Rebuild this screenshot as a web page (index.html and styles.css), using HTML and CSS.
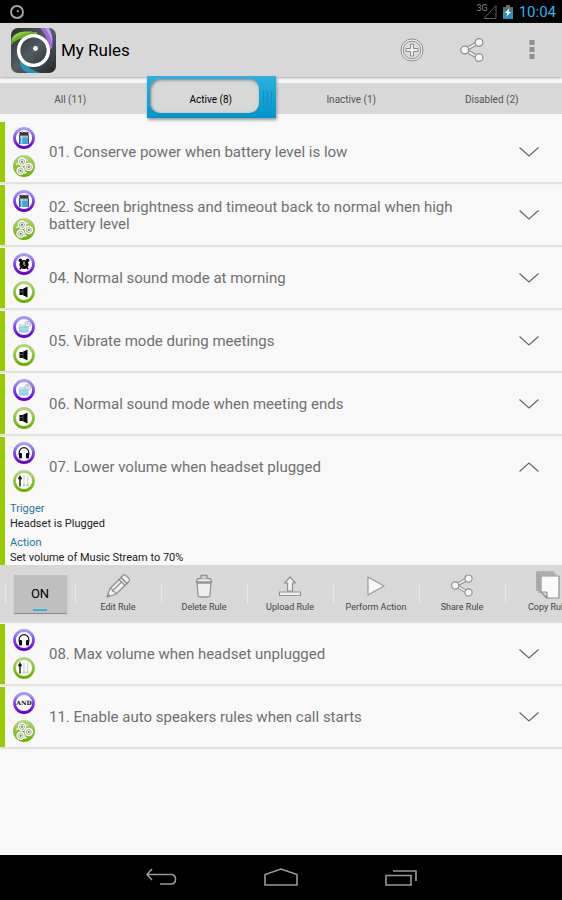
FILE: index.html
```html
<!DOCTYPE html>
<html lang="en">
<head>
<meta charset="utf-8">
<meta name="viewport" content="width=device-width, initial-scale=1">
<title>My Rules</title>
<link rel="stylesheet" href="styles.css">
</head>
<body>
<svg class="defs" aria-hidden="true">
  <defs>
    <linearGradient id="purple" x1="0" y1="0" x2="0" y2="1"><stop offset="0" stop-color="#a99cf8"/><stop offset=".5" stop-color="#8348e6"/><stop offset="1" stop-color="#6a00c8"/></linearGradient>
    <linearGradient id="green" x1="0" y1="0" x2="0" y2="1"><stop offset="0" stop-color="#b4d67c"/><stop offset=".5" stop-color="#8cc43a"/><stop offset="1" stop-color="#6cae00"/></linearGradient>
    <linearGradient id="slate" x1="0" y1="0" x2="1" y2="1"><stop offset="0" stop-color="#2b3337"/><stop offset=".5" stop-color="#535d64"/><stop offset="1" stop-color="#22282c"/></linearGradient>
    <clipPath id="tile"><rect width="45" height="45" rx="7"/></clipPath>
  </defs>
  <symbol id="trigger-ring" viewBox="0 0 22 22"><circle cx="11" cy="11" r="9.500" fill="#fcfcff" stroke="url(#purple)" stroke-width="2.800"/></symbol>
  <symbol id="action-ring" viewBox="0 0 22 22"><circle cx="11" cy="11" r="9.500" fill="#fcfffa" stroke="url(#green)" stroke-width="2.800"/></symbol>
  <symbol id="battery" viewBox="0 0 22 22"><use href="#trigger-ring"/><path d="M6.500 5h9v5h-9z" fill="#34383b"/><path d="M8.500 4.500h1.500v1.500h-1.500zM12.500 4.500H14V6h-1.500z" fill="#888"/><path d="M6 8.500h10v3H6z" fill="#a9b4ba"/><path d="M6 11h10v6H6z" fill="#3ba9dd"/><path d="M6.500 8v9M15.500 8v9" stroke="#47545b"/><path d="M8.700 9v8" stroke="#fff" opacity=".6"/></symbol>
  <symbol id="gears" viewBox="0 0 22 22"><circle cx="11" cy="11" r="11" fill="url(#green)"/><g fill="#fff"><circle cx="9" cy="6.800" r="4.200"/><circle cx="15.800" cy="12" r="4.200"/><circle cx="7.600" cy="15.800" r="4.200"/><path d="M13 4l2 1-1 1.500zM3.500 8l2 1-2 1.500zM12 16l2 2-3 1z"/></g><g fill="#eceee9" stroke="#8f9a88" stroke-width=".7"><circle cx="9" cy="6.800" r="2.600"/><circle cx="15.800" cy="12" r="2.600"/><circle cx="7.600" cy="15.800" r="2.600"/></g><g fill="#70706f"><circle cx="9" cy="6.800" r="1"/><circle cx="15.800" cy="12" r="1"/><circle cx="7.600" cy="15.800" r="1"/></g></symbol>
  <symbol id="alarm" viewBox="0 0 22 22"><use href="#trigger-ring"/><g fill="#0a0a0a"><circle cx="11" cy="11.500" r="4.600"/><circle cx="7.300" cy="7.300" r="1.700"/><circle cx="14.700" cy="7.300" r="1.700"/></g><path d="M8 14.500l-1.200 1.800M14 14.500l1.200 1.800" stroke="#0a0a0a" stroke-width="1.500"/><path d="M11 8.500v3l1.500 1.500" fill="none" stroke="#fff"/></symbol>
  <symbol id="speaker" viewBox="0 0 22 22"><use href="#action-ring"/><path d="M6.500 8H9.500L14.500 5.500v11L9.500 14H6.500z" fill="#0a0a0a"/><path d="M10 8v6M6.500 10.500h3.500" stroke="#777" stroke-width=".6"/></symbol>
  <symbol id="calendar" viewBox="0 0 22 22"><use href="#trigger-ring"/><path d="M6 8h9.500v8.500H6z" fill="#8fd3ea"/><path d="M6 8h9.500v2.500H6z" fill="#cfe4ea"/><path d="M7 13h7.500" stroke="#c5eaf5" stroke-width=".8"/><circle cx="14.700" cy="8" r="2.800" fill="#e8eef1" stroke="#9eb4bf" stroke-width=".8"/><path d="M14.500 6.300V8l1.300-.8" fill="none" stroke="#809aa6" stroke-width=".6"/></symbol>
  <symbol id="headset" viewBox="0 0 22 22"><use href="#trigger-ring"/><path d="M6.200 13v-2.500a4.800 4.800 0 0 1 9.600 0V13" fill="none" stroke="#111" stroke-width="1.200"/><rect x="6" y="11" width="3" height="5.500" rx="1" fill="#0a0a0a"/><rect x="13" y="11" width="3" height="5.500" rx="1" fill="#0a0a0a"/></symbol>
  <symbol id="levels" viewBox="0 0 22 22"><use href="#action-ring"/><path d="M7 5.500v11" stroke="#111" stroke-width="1.400"/><path d="M5.200 7.300h3.600v2H5.200z" fill="#111"/><path d="M11 5.500v10M14.500 5.500v10" stroke="#d2d2d2" stroke-width="1.300"/><path d="M9.700 14.500h2.600v1.700H9.700zM13.200 14.500h2.600v1.700h-2.600z" fill="#c4c4c4"/></symbol>
  <symbol id="chevron" viewBox="0 0 22 12"><path d="M1.500 1.500L11 10l9.500-8.500" fill="none" stroke="#666" stroke-width="1.200"/></symbol>
  <symbol id="share" viewBox="0 0 24 24"><path d="M18.500 4.500L5 12l13.500 7.500" fill="none" stroke="#8f8f8f" stroke-width="4"/><path d="M18.500 4.500L5 12l13.500 7.500" fill="none" stroke="#f0f0f0" stroke-width="1.800"/><g fill="#f4f4f4" stroke="#8f8f8f" stroke-width="1.200"><circle cx="19" cy="4.500" r="3.900"/><circle cx="4.700" cy="12" r="3.900"/><circle cx="19" cy="19.500" r="3.900"/></g></symbol>
</svg>

<div class="status-bar">
  <svg width="16" height="16" viewBox="0 0 16 16"><circle cx="8" cy="8" r="6" fill="none" stroke="#aaa" stroke-width="1.800"/><path d="M1.500 5.500Q3 1.500 8 1.500M14.500 11Q13 14.500 8 14.500" fill="none" stroke="#888" stroke-width="1"/><circle cx="8.800" cy="7.200" r="1.100" fill="#aaa"/></svg>
  <div class="status-right">
    <span class="network">3G</span>
    <svg class="signal" width="14" height="16" viewBox="0 0 14 16"><path d="M13 1.500V14.500H1z" fill="none" stroke="#606060"/></svg>
    <svg class="charge" width="10" height="16" viewBox="0 0 10 16"><path d="M3 1h4v2h3v5H0V3h3z" fill="#606b70"/><path d="M0 7h10v8H0z" fill="#2b91bd"/><path d="M6.500 4L2 9h2.500L3 13l5-5H5.500z" fill="#fff"/></svg>
    <time>10:04</time>
  </div>
</div>

<header class="app-bar">
  <svg class="logo" width="45" height="45" viewBox="0 0 45 45"><g clip-path="url(#tile)"><rect width="45" height="45" fill="url(#slate)"/><path d="M0 17Q0 5 14 4h12v6Q8 7 0 17z" fill="#68b51e"/><path d="M0 13Q2 4 14 3.500h8Q7 6 0 13z" fill="#8bce42"/><path d="M29 0h9q5 9 3 20l-5 4Q39 10 29 0z" fill="#a06bdb"/><path d="M34 0h4q4 8 3 16Q39 6 34 0z" fill="#c49bf0"/><path d="M9 31q8 10 20 14H17Q8 42 9 31z" fill="#2693b8"/><circle cx="22.500" cy="22.500" r="14.800" fill="#4b555c" stroke="#fff" stroke-width="3.600"/><circle cx="22.500" cy="22.500" r="13" fill="url(#slate)" opacity=".7"/><circle cx="24.500" cy="20.500" r="2.400" fill="#fff"/></g></svg>
  <h1>My Rules</h1>
  <button class="bar-button" type="button" aria-label="Add rule"><svg width="24" height="24" viewBox="0 0 24 24"><circle cx="12" cy="12" r="11" fill="#eee" stroke="#8d8d8d"/><circle cx="12" cy="12" r="8.800" fill="#dcdcdc" stroke="#8d8d8d"/><path d="M10.500 6h3v4.500H18v3h-4.500V18h-3v-4.500H6v-3h4.500z" fill="#eee" stroke="#8d8d8d"/></svg></button>
  <button class="bar-button" type="button" aria-label="Share"><svg width="24" height="24"><use href="#share"/></svg></button>
  <button class="bar-button" type="button" aria-label="More options"><svg width="6" height="20" viewBox="0 0 6 20"><path d="M.5 0h5v5h-5zM.5 7h5v5h-5zM.5 14h5v5h-5z" fill="#8f8f8f"/></svg></button>
</header>

<nav class="tabs" aria-label="Rule filter">
  <a href="#all">All (11)</a>
  <a href="#active" class="current" aria-current="page"><span>Active (8)</span></a>
  <a href="#inactive">Inactive (1)</a>
  <a href="#disabled">Disabled (2)</a>
</nav>

<main class="rules">
  <section class="rule"><div class="rule-head"><div class="badges"><svg><use href="#battery"/></svg><svg><use href="#gears"/></svg></div><h2>01. Conserve power when battery level is low</h2><button class="toggle" type="button" aria-label="Expand rule 01"><svg><use href="#chevron"/></svg></button></div></section>
  <section class="rule"><div class="rule-head"><div class="badges"><svg><use href="#battery"/></svg><svg><use href="#gears"/></svg></div><h2>02. Screen brightness and timeout back to normal when high battery level</h2><button class="toggle" type="button" aria-label="Expand rule 02"><svg><use href="#chevron"/></svg></button></div></section>
  <section class="rule"><div class="rule-head"><div class="badges"><svg><use href="#alarm"/></svg><svg><use href="#speaker"/></svg></div><h2>04. Normal sound mode at morning</h2><button class="toggle" type="button" aria-label="Expand rule 04"><svg><use href="#chevron"/></svg></button></div></section>
  <section class="rule"><div class="rule-head"><div class="badges"><svg><use href="#calendar"/></svg><svg><use href="#speaker"/></svg></div><h2>05. Vibrate mode during meetings</h2><button class="toggle" type="button" aria-label="Expand rule 05"><svg><use href="#chevron"/></svg></button></div></section>
  <section class="rule"><div class="rule-head"><div class="badges"><svg><use href="#calendar"/></svg><svg><use href="#speaker"/></svg></div><h2>06. Normal sound mode when meeting ends</h2><button class="toggle" type="button" aria-label="Expand rule 06"><svg><use href="#chevron"/></svg></button></div></section>
  <section class="rule expanded">
    <div class="rule-head"><div class="badges"><svg><use href="#headset"/></svg><svg><use href="#levels"/></svg></div><h2>07. Lower volume when headset plugged</h2><button class="toggle" type="button" aria-expanded="true" aria-label="Collapse rule 07"><svg><use href="#chevron"/></svg></button></div>
    <dl class="details">
      <dt>Trigger</dt><dd>Headset is Plugged</dd>
      <dt>Action</dt><dd>Set volume of Music Stream to 70%</dd>
    </dl>
  </section>
  <div class="actions">
    <div class="switch-cell"><button class="switch" type="button" aria-pressed="true">ON</button></div>
    <button class="action" type="button"><svg viewBox="0 0 26 26"><g fill="#eee" stroke="#929292" stroke-width="1.200" stroke-linejoin="round"><path d="M2 24L5 15.500 17 3.500l6 6L10.500 21.500z"/><path d="M16 4.500l2-2q1.500-1.200 3 0l3 3q1 1.500 0 3l-2 2z"/><path d="M14 6.500l6 6M16 4.500l6 6" fill="none"/><path d="M5 15.500l2 .5.800 2.300 2.200.7.500 2.500M8 17.500l9-9" fill="none"/></g><path d="M2 24l1.300-3.500L5.500 23z" fill="#888"/></svg>Edit Rule</button>
    <button class="action" type="button"><svg viewBox="0 0 26 26"><g fill="#eee" stroke="#929292" stroke-width="1.300" stroke-linejoin="round"><path d="M6 10l1 12q.2 2 2 2h8q1.800 0 2-2l1-12z"/><path d="M5.500 9q0-3.500 3-3.500h9q3 0 3 3.500z"/><path d="M10 5.500V2.500h6v3" fill="#d7d7d7"/></g></svg>Delete Rule</button>
    <button class="action" type="button"><svg viewBox="0 0 26 26"><g fill="#eee" stroke="#929292" stroke-width="1.200" stroke-linejoin="round"><path d="M13 4l5.500 6h-3v8h-5v-8h-3z"/><path d="M2.500 19h21v3.500h-21z"/></g></svg>Upload Rule</button>
    <button class="action" type="button"><svg viewBox="0 0 26 26"><path d="M5 4l16 9-16 9z" fill="#f7f7f7" stroke="#999" stroke-width="1.200" stroke-linejoin="round"/></svg>Perform Action</button>
    <button class="action" type="button"><svg viewBox="-2 -1 28 27"><use href="#share" width="24" height="24"/></svg>Share Rule</button>
    <button class="action" type="button"><svg class="copy" viewBox="0 0 26 28"><g fill="#c9c9c9" stroke="#929292" stroke-width="1.200" stroke-linejoin="round"><path d="M2 20V1h17"/><path d="M4 22V3h17"/><path d="M6 5h18v22H12l-6-6z" fill="#fafafa"/><path d="M6 21h6v6z" fill="#ddd"/></g></svg>Copy Rule</button>
  </div>
  <section class="rule"><div class="rule-head"><div class="badges"><svg><use href="#headset"/></svg><svg><use href="#levels"/></svg></div><h2>08. Max volume when headset unplugged</h2><button class="toggle" type="button" aria-label="Expand rule 08"><svg><use href="#chevron"/></svg></button></div></section>
  <section class="rule"><div class="rule-head"><div class="badges"><svg viewBox="0 0 22 22"><use href="#trigger-ring"/><text x="11" y="13" class="and-text">AND</text></svg><svg><use href="#gears"/></svg></div><h2>11. Enable auto speakers rules when call starts</h2><button class="toggle" type="button" aria-label="Expand rule 11"><svg><use href="#chevron"/></svg></button></div></section>
</main>

<footer class="system-nav">
  <button type="button" aria-label="Back"><svg width="34" height="22" viewBox="0 0 34 22"><path d="M8 2L3 7.500 8 13M3 7.500h24q4.500 0 4.500 4.700T27 17H16" fill="none" stroke="#999" stroke-width="1.600"/></svg></button>
  <button type="button" aria-label="Home"><svg width="34" height="22" viewBox="0 0 34 22"><path d="M1 18V7.500L17 2l16 5.500V18z" fill="none" stroke="#999" stroke-width="1.600"/></svg></button>
  <button type="button" aria-label="Recent apps"><svg width="34" height="22" viewBox="0 0 34 22"><path d="M2 8.500h25v9.500H2zM9 4h23v10" fill="none" stroke="#999" stroke-width="1.600"/></svg></button>
</footer>
</body>
</html>
```

FILE: styles.css
```css
* { box-sizing: border-box; }

body {
  margin: 0;
  min-height: 100vh;
  display: flex;
  flex-direction: column;
  background: #f8f8f8;
  color: #000;
  font-family: Roboto, "Noto Sans", sans-serif;
}

h1, h2, dl, dd { margin: 0; font-weight: 400; }

button {
  margin: 0;
  padding: 0;
  border: 0;
  background: none;
  color: inherit;
  font: inherit;
}

svg { display: block; flex: none; }

.defs { position: absolute; width: 0; height: 0; }

.and-text {
  font: bold 6px "DejaVu Serif", serif;
  text-anchor: middle;
}

.status-bar {
  display: flex;
  align-items: center;
  justify-content: space-between;
  height: 23px;
  padding: 0 6px 0 9px;
  background: #000;
}

.status-right {
  display: flex;
  align-items: center;
  color: #33b5e5;
  font-size: 15px;
}

.network {
  align-self: flex-start;
  color: #888;
  font-size: 9px;
  line-height: 10px;
}

.signal { margin-left: -5px; }
.charge { margin: 0 6px; }

.app-bar {
  display: flex;
  align-items: center;
  height: 54px;
  padding-left: 11px;
  background: #d8d8d8;
  box-shadow: 0 1px 2px #aaa;
}

.app-bar h1 {
  flex: 1;
  padding-left: 5px;
  font-size: 17px;
  line-height: 20px;
}

.bar-button {
  display: grid;
  place-items: center;
  width: 60px;
  height: 54px;
}

.tabs {
  display: grid;
  grid-template-columns: repeat(4, 1fr);
  height: 31px;
  margin-top: 6px;
  background: #d8d8d8;
  color: #555;
  font-size: 10px;
  line-height: 33px;
  text-align: center;
}

.tabs a { color: inherit; text-decoration: none; }

.tabs .current { position: relative; color: #000; }
.tabs .current span { position: relative; z-index: 1; }

.tabs .current::before {
  content: "";
  position: absolute;
  inset: -7px 5px -2px 6px;
  background: repeating-linear-gradient(90deg, #128fc2 0 1px, transparent 1px 4px) right 4px center / 9px 12px no-repeat, linear-gradient(#2fb0e0, #0094cc);
  box-shadow: 1px 2px 3px #999;
}

.tabs .current::after {
  content: "";
  position: absolute;
  inset: -4px 22px 3px 9px;
  border-radius: 10px;
  background: #d8d8d8;
  box-shadow: inset 1px 1px 3px #777;
}

.rules { margin-top: 8px; }

.rule {
  border-left: 5px solid #99cc00;
  margin-bottom: 3px;
  box-shadow: 0 2px 1px #e2e2e2;
}

.rule-head {
  display: flex;
  align-items: center;
  min-height: 60px;
  padding-right: 22px;
}

.badges {
  display: flex;
  flex-direction: column;
  gap: 6px;
  margin: 0 14px 0 8px;
}

.badges svg { width: 22px; height: 22px; }

.rule h2 {
  flex: 1;
  padding: 1px 56px 0 0;
  color: #707070;
  font-size: 15px;
  line-height: 17px;
}

.toggle svg { width: 22px; height: 12px; }
.expanded .toggle svg { transform: rotate(180deg); }

.rule.expanded { margin-bottom: 0; box-shadow: none; }

.details {
  padding: 4px 5px 0;
  color: #222;
  font-size: 11px;
  line-height: 15px;
}

.details dt { color: #1f7798; }
.details dd { margin-bottom: 4px; }
.details dd:last-child { margin-bottom: 0; }

.actions {
  display: flex;
  align-items: center;
  height: 57px;
  margin-bottom: 2px;
  overflow: hidden;
  background: #d8d8d8;
  box-shadow: 0 1px 1px #dedede;
}

.switch-cell {
  flex: none;
  display: flex;
  align-items: center;
  justify-content: center;
  width: 70px;
  height: 57px;
  margin-left: 5px;
  background: linear-gradient(#e8e8e8, #e8e8e8) left center / 1px 20px no-repeat;
}

.switch {
  width: 53px;
  height: 38px;
  border-radius: 1px;
  background: linear-gradient(#33b5e5, #33b5e5) center 34px / 14px 2px no-repeat, #bfbfbf;
  box-shadow: 0 1px 1px #888;
  font-size: 13px;
}

.action {
  flex: none;
  display: flex;
  flex-direction: column;
  align-items: center;
  justify-content: center;
  gap: 1px;
  width: 86px;
  height: 57px;
  background: linear-gradient(#e8e8e8, #e8e8e8) left center / 1px 20px no-repeat;
  color: #444;
  font-size: 9px;
  line-height: 14px;
  white-space: nowrap;
}

.action svg { width: 26px; height: 26px; }
.action .copy { height: 28px; margin-top: -2px; }

.system-nav {
  display: flex;
  align-items: center;
  justify-content: center;
  gap: 86px;
  height: 45px;
  margin-top: auto;
  background: #000;
}
```
